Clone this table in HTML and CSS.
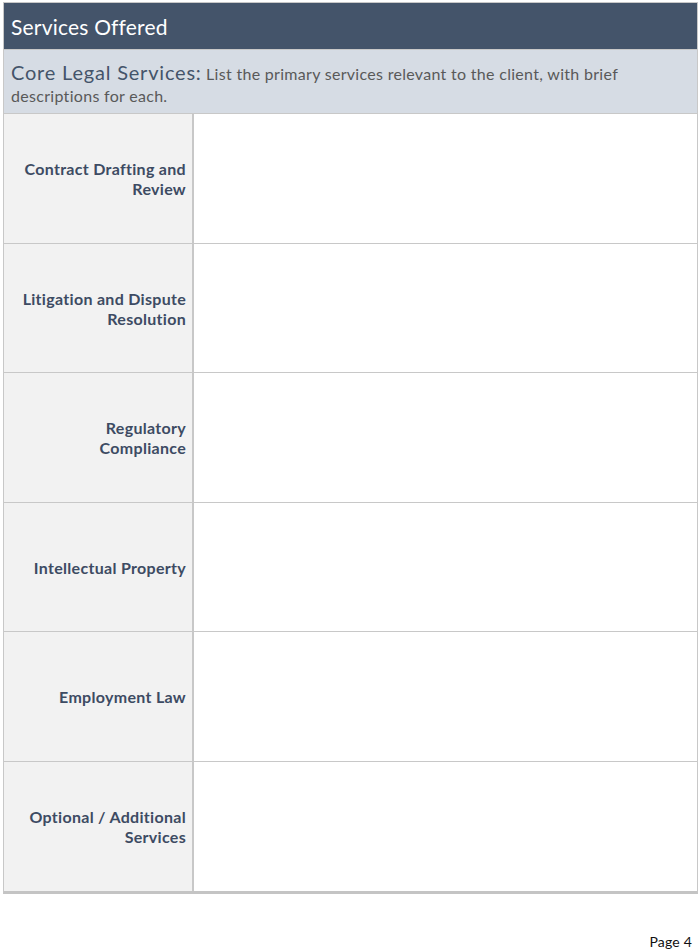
FILE: index.html
```html
<!DOCTYPE html>
<html>
<head>
<meta charset="utf-8">
<link rel="stylesheet" href="styles.css">
</head>
<body>
<div class="page">
  <div class="sheet">
    <div class="title">Services Offered</div>
    <p class="intro"><span class="intro-lead">Core Legal Services:</span><span class="intro-text"> List the primary services relevant to the client, with brief descriptions for each.</span></p>
    <div class="row"><div class="label">Contract Drafting and Review</div><div class="cell"></div></div>
    <div class="row"><div class="label">Litigation and Dispute Resolution</div><div class="cell"></div></div>
    <div class="row"><div class="label">Regulatory Compliance</div><div class="cell"></div></div>
    <div class="row"><div class="label">Intellectual Property</div><div class="cell"></div></div>
    <div class="row"><div class="label">Employment Law</div><div class="cell"></div></div>
    <div class="row last"><div class="label">Optional / Additional Services</div><div class="cell"></div></div>
  </div>
  <div class="footer">Page 4</div>
</div>
</body>
</html>
```

FILE: styles.css
```css
html, body {
  margin: 0;
  padding: 0;
  background: #ffffff;
}
body {
  font-family: "Lato", "DejaVu Sans", sans-serif;
  color: #3d4b63;
}
.page {
  width: 700px;
  height: 952px;
  padding: 2px 2px 0 3px;
  box-sizing: border-box;
  display: flex;
  flex-direction: column;
}
.sheet {
  border: 1px solid #c8c8c8;
  border-bottom: 3px solid #c4c4c4;
  display: flex;
  flex-direction: column;
}
.title {
  height: 47px;
  background: #44546a;
  color: #ffffff;
  font-size: 21px;
  letter-spacing: 0.2px;
  padding-left: 7px;
  display: flex;
  align-items: center;
  border-bottom: 1px solid #c8c8c8;
  box-sizing: border-box;
}
.intro {
  margin: 0;
  height: 64px;
  background: #d6dce4;
  line-height: 22px;
  padding: 11px 40px 0 7px;
  box-sizing: border-box;
  border-bottom: 1px solid #c8c8c8;
}
.intro-lead {
  font-size: 20px;
  letter-spacing: 0.8px;
  color: #44546a;
}
.intro-text {
  font-size: 16px;
  letter-spacing: 0.3px;
  color: #595959;
}
.row {
  display: grid;
  grid-template-columns: 190px 1fr;
  height: 129.5px;
  border-bottom: 1px solid #c8c8c8;
  box-sizing: border-box;
}
.row.last {
  border-bottom: none;
}
.label {
  background: #f2f2f2;
  border-right: 2px solid #c8c8c8;
  display: flex;
  align-items: center;
  justify-content: flex-end;
  text-align: right;
  font-weight: bold;
  font-size: 16px;
  letter-spacing: 0.3px;
  line-height: 20px;
  padding: 2px 6px 0 14px;
  color: #3d4b63;
}
.cell {
  background: #ffffff;
}
.footer {
  margin-top: auto;
  text-align: right;
  font-size: 14px;
  letter-spacing: 0.2px;
  color: #111111;
  padding: 0 6px 2px 0;
}
```
